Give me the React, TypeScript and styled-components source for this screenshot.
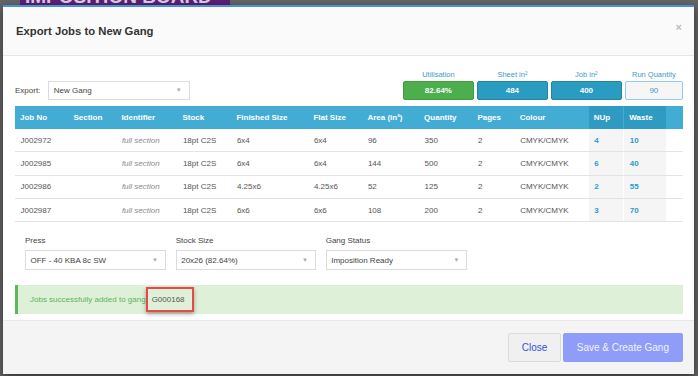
import React from "react";
import styled, { createGlobalStyle } from "styled-components";

const Global = createGlobalStyle`
  html, body { margin: 0; padding: 0; }
  body { font-family: "Liberation Sans", Arial, sans-serif; background: #646464; }
  * { box-sizing: border-box; }
`;

const Page = styled.div`
  width: 698px;
  height: 376px;
  overflow: hidden;
  background: #646464;
  display: flex;
  flex-direction: column;
  padding: 0 4px 0 3px;
`;

const TopStrip = styled.div`
  height: 4.5px;
  overflow: hidden;
  display: flex;
  align-items: flex-end;
  padding-left: 17px;
`;

const Banner = styled.div`
  width: 210px;
  height: 22px;
  flex: none;
  overflow: hidden;
  background: #5e1f72;
  color: #d9cfe0;
  font-weight: bold;
  font-size: 19px;
  line-height: 28px;
  padding-left: 5px;
  white-space: nowrap;
`;

const Modal = styled.div`
  flex: 1;
  display: flex;
  flex-direction: column;
  background: #fff;
  border-top: 2.5px solid #4b8fdc;
  box-shadow: 0 3px 8px rgba(0, 0, 0, 0.5);
  margin-bottom: 2px;
`;

const Header = styled.div`
  height: 49.5px;
  background: #fafafa;
  border-bottom: 1px solid #e6e6e6;
  display: flex;
  align-items: center;
  justify-content: space-between;
  padding: 0 12px 0 13px;
`;

const Title = styled.h4`
  margin: 0;
  font-size: 11.3px;
  font-weight: bold;
  color: #333;
`;

const CloseX = styled.span`
  font-size: 11px;
  color: #bdbdbd;
  font-weight: bold;
  margin-top: -8px;
`;

const Body = styled.div`
  flex: 1;
  padding: 12.5px 11.3px 0 12px;
  display: flex;
  flex-direction: column;
`;

const TopRow = styled.div`
  display: flex;
  justify-content: space-between;
  align-items: flex-start;
`;

const ExportGroup = styled.div`
  display: flex;
  align-items: center;
  gap: 8px;
  margin-top: 12px;
`;

const Label = styled.span`
  font-size: 8px;
  color: #444;
`;

const Select = styled.div<{ $w: number }>`
  width: ${(p) => p.$w}px;
  height: 19.7px;
  border: 1px solid #dcdcdc;
  background: #fff;
  display: flex;
  align-items: center;
  justify-content: space-between;
  padding: 0 7px 0 4.5px;
  font-size: 8px;
  color: #444;
`;

const Caret = styled.span`
  font-size: 6px;
  color: #aaa;
`;

const Stats = styled.div`
  display: flex;
  gap: 3.3px;
  margin-top: 1.5px;
`;

const Stat = styled.div<{ $w: number }>`
  width: ${(p) => p.$w}px;
  display: flex;
  flex-direction: column;
  align-items: center;
  gap: 1px;
`;

const StatLabel = styled.div`
  font-size: 7.5px;
  line-height: 10px;
  color: #3a9ccc;
`;

const StatBox = styled.div<{ $kind: "green" | "blue" | "plain" }>`
  width: 100%;
  height: 18.6px;
  border-radius: 2px;
  display: flex;
  align-items: center;
  justify-content: center;
  font-size: 8px;
  font-weight: ${(p) => (p.$kind === "plain" ? "normal" : "bold")};
  color: ${(p) => (p.$kind === "plain" ? "#3d9cc6" : "#fff")};
  background: ${(p) =>
    p.$kind === "green" ? "#4cae4c" : p.$kind === "blue" ? "#2a9bc1" : "#f6f6f6"};
  border: 1px solid
    ${(p) => (p.$kind === "green" ? "#419e41" : p.$kind === "blue" ? "#23869f" : "#93cde3")};
`;

const COLS = "53.4px 48px 61px 54px 77px 54px 56.7px 53.3px 42.3px 74px 34px 1.7px 42px 1fr";

const Table = styled.div`
  margin-top: 5.5px;
  display: flex;
  flex-direction: column;
`;

const HeadRow = styled.div`
  display: grid;
  grid-template-columns: ${COLS};
  height: 23.3px;
  background: #43acd4;
`;

const HeadCell = styled.div<{ $dark?: boolean }>`
  display: flex;
  align-items: center;
  padding-left: 5px;
  font-size: 8px;
  font-weight: bold;
  color: #fff;
  background: ${(p) => (p.$dark ? "#2f9bc3" : "transparent")};
  white-space: nowrap;
`;

const Row = styled.div`
  display: grid;
  grid-template-columns: ${COLS};
  height: 23.3px;
  border-bottom: 1px solid #e3e3e3;
`;

const Cell = styled.div<{ $tone?: "muted" | "accent" }>`
  display: flex;
  align-items: center;
  padding-left: 5.5px;
  font-size: 8px;
  white-space: nowrap;
  color: ${(p) => (p.$tone === "muted" ? "#8a8a8a" : p.$tone === "accent" ? "#2b9ccb" : "#555")};
  font-style: ${(p) => (p.$tone === "muted" ? "italic" : "normal")};
  font-weight: ${(p) => (p.$tone === "accent" ? "bold" : "normal")};
  background: ${(p) => (p.$tone === "accent" ? "#f5f5f5" : "transparent")};
`;

const FormRow = styled.div`
  margin-top: 13.5px;
  padding-left: 10px;
  display: flex;
  gap: 9.7px;
`;

const Field = styled.div`
  display: flex;
  flex-direction: column;
  gap: 4.5px;
`;

const FieldLabel = styled.label`
  font-size: 8px;
  line-height: 10px;
  color: #444;
`;

const Alert = styled.div`
  margin-top: 15.3px;
  height: 29px;
  background: #dff0d8;
  border-left: 3.5px solid #5cb85c;
  display: flex;
  align-items: center;
  padding-left: 12px;
  font-size: 8px;
  color: #5db35d;
`;

const GangId = styled.span`
  position: relative;
  color: #555;
  margin-left: 6px;
  &::after {
    content: "";
    position: absolute;
    top: -8px;
    bottom: -7.5px;
    left: -6px;
    right: -9px;
    border: 2.5px solid #e84848;
    box-shadow: 0 2px 4px rgba(0, 0, 0, 0.35);
  }
`;

const Footer = styled.div`
  height: 54.5px;
  border-top: 1px solid #e8e8e8;
  background: #f4f4f4;
  display: flex;
  justify-content: flex-end;
  align-items: center;
  gap: 2.3px;
  padding: 0 11.3px 0 0;
  margin-top: 5px;
`;

const Button = styled.button<{ $primary?: boolean }>`
  height: 29px;
  border-radius: 2px;
  font-family: "Liberation Sans", Arial, sans-serif;
  font-size: 10px;
  padding: 0;
  width: ${(p) => (p.$primary ? "119.7px" : "52.4px")};
  background: ${(p) => (p.$primary ? "#8f9cf8" : "#f0f0f0")};
  color: ${(p) => (p.$primary ? "#f2f3ff" : "#3a4fe0")};
  border: 1px solid ${(p) => (p.$primary ? "#8f9cf8" : "#dadada")};
`;

const jobs = [
  { no: "J002972", stock: "18pt C2S", fin: "6x4", flat: "6x4", area: "96", qty: "350", nup: "4", waste: "10" },
  { no: "J002985", stock: "18pt C2S", fin: "6x4", flat: "6x4", area: "144", qty: "500", nup: "6", waste: "40" },
  { no: "J002986", stock: "18pt C2S", fin: "4.25x6", flat: "4.25x6", area: "52", qty: "125", nup: "2", waste: "55" },
  { no: "J002987", stock: "18pt C2S", fin: "6x6", flat: "6x6", area: "108", qty: "200", nup: "3", waste: "70" },
];

const headers = ["Job No", "Section", "Identifier", "Stock", "Finished Size", "Flat Size", "Area (in²)", "Quantity", "Pages", "Colour"];

export default function App() {
  return (
    <>
      <Global />
      <Page>
        <TopStrip>
          <Banner>IMPOSITION BOARD</Banner>
        </TopStrip>
        <Modal>
          <Header>
            <Title>Export Jobs to New Gang</Title>
            <CloseX>×</CloseX>
          </Header>
          <Body>
            <TopRow>
              <ExportGroup>
                <Label>Export:</Label>
                <Select $w={141.4}>
                  <span>New Gang</span>
                  <Caret>▼</Caret>
                </Select>
              </ExportGroup>
              <Stats>
                <Stat $w={70.7}>
                  <StatLabel>Utilisation</StatLabel>
                  <StatBox $kind="green">82.64%</StatBox>
                </Stat>
                <Stat $w={70.7}>
                  <StatLabel>Sheet in²</StatLabel>
                  <StatBox $kind="blue">484</StatBox>
                </Stat>
                <Stat $w={70.7}>
                  <StatLabel>Job in²</StatLabel>
                  <StatBox $kind="blue">400</StatBox>
                </Stat>
                <Stat $w={57.7}>
                  <StatLabel>Run Quantity</StatLabel>
                  <StatBox $kind="plain">90</StatBox>
                </Stat>
              </Stats>
            </TopRow>
            <Table>
              <HeadRow>
                {headers.map((h) => (
                  <HeadCell key={h}>{h}</HeadCell>
                ))}
                <HeadCell $dark>NUp</HeadCell>
                <HeadCell />
                <HeadCell $dark>Waste</HeadCell>
                <HeadCell />
              </HeadRow>
              {jobs.map((j) => (
                <Row key={j.no}>
                  <Cell>{j.no}</Cell>
                  <Cell />
                  <Cell $tone="muted">full section</Cell>
                  <Cell>{j.stock}</Cell>
                  <Cell>{j.fin}</Cell>
                  <Cell>{j.flat}</Cell>
                  <Cell>{j.area}</Cell>
                  <Cell>{j.qty}</Cell>
                  <Cell>2</Cell>
                  <Cell>CMYK/CMYK</Cell>
                  <Cell $tone="accent">{j.nup}</Cell>
                  <Cell />
                  <Cell $tone="accent">{j.waste}</Cell>
                  <Cell />
                </Row>
              ))}
            </Table>
            <FormRow>
              <Field>
                <FieldLabel>Press</FieldLabel>
                <Select $w={141}>
                  <span>OFF - 40 KBA 8c SW</span>
                  <Caret>▼</Caret>
                </Select>
              </Field>
              <Field>
                <FieldLabel>Stock Size</FieldLabel>
                <Select $w={140.3}>
                  <span>20x26 (82.64%)</span>
                  <Caret>▼</Caret>
                </Select>
              </Field>
              <Field>
                <FieldLabel>Gang Status</FieldLabel>
                <Select $w={141.7}>
                  <span>Imposition Ready</span>
                  <Caret>▼</Caret>
                </Select>
              </Field>
            </FormRow>
            <Alert>
              Jobs successfully added to gang
              <GangId>G000168</GangId>
            </Alert>
          </Body>
          <Footer>
            <Button>Close</Button>
            <Button $primary>Save &amp; Create Gang</Button>
          </Footer>
        </Modal>
      </Page>
    </>
  );
}
